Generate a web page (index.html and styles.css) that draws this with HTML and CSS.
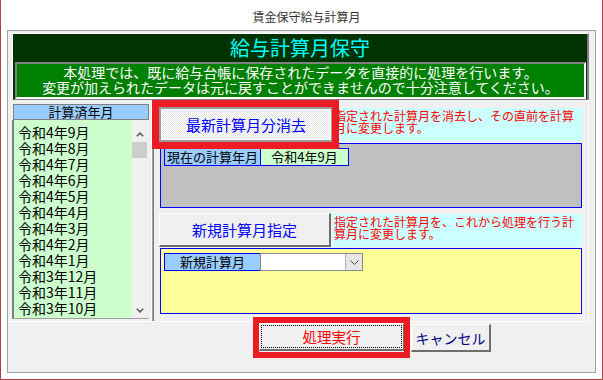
FILE: index.html
```html
<!DOCTYPE html>
<html lang="ja">
<head>
<meta charset="utf-8">
<title>賃金保守給与計算月</title>
<link rel="stylesheet" href="styles.css">
</head>
<body>
<div class="window">
  <div class="titlebar">賃金保守給与計算月</div>
  <div class="panel">
    <div class="header">
      <div class="header-title">給与計算月保守</div>
      <div class="notice">本処理では、既に給与台帳に保存されたデータを直接的に処理を行います。<br>変更が加えられたデータは元に戻すことができませんので十分注意してください。</div>
    </div>
    <div class="main">
      <div class="left">
        <div class="list-head">計算済年月</div>
        <div class="list">
          <div class="items">
            <div>令和4年9月</div>
            <div>令和4年8月</div>
            <div>令和4年7月</div>
            <div>令和4年6月</div>
            <div>令和4年5月</div>
            <div>令和4年4月</div>
            <div>令和4年3月</div>
            <div>令和4年2月</div>
            <div>令和4年1月</div>
            <div>令和3年12月</div>
            <div>令和3年11月</div>
            <div>令和3年10月</div>
            <div>令和3年9月</div>
          </div>
          <div class="scrollbar">
            <svg class="sb-up" width="8" height="5" viewBox="0 0 8 5"><path d="M0.8 4.3 L4 1.1 L7.2 4.3" stroke="#606060" stroke-width="1.6" fill="none"/></svg>
            <div class="thumb"></div>
            <div class="sb-fill"></div>
            <svg class="sb-down" width="8" height="5" viewBox="0 0 8 5"><path d="M0.8 0.7 L4 3.9 L7.2 0.7" stroke="#606060" stroke-width="1.6" fill="none"/></svg>
          </div>
        </div>
      </div>
      <div class="divider"></div>
      <div class="right">
        <div class="row row1">
          <button class="btn btn-top">最新計算月分消去</button>
          <div class="desc">指定された計算月を消去し、その直前を計算<br>月に変更します。</div>
        </div>
        <div class="box box-gray">
          <div class="field">
            <span class="label">現在の計算年月</span>
            <span class="value">令和4年9月</span>
          </div>
        </div>
        <div class="row row2">
          <button class="btn btn-new">新規計算月指定</button>
          <div class="desc desc2">指定された計算月を、これから処理を行う計<br>算月に変更します。</div>
        </div>
        <div class="box box-yellow">
          <div class="field">
            <span class="label label-new">新規計算月</span>
            <span class="select"><span class="select-btn"><svg width="9" height="5" viewBox="0 0 9 5"><path d="M0.5 0.5 L4.5 4.5 L8.5 0.5" stroke="#505050" stroke-width="1" fill="none"/></svg></span></span>
          </div>
        </div>
      </div>
    </div>
    <div class="footer">
      <button class="btn btn-exec"><span class="focus">処理実行</span></button>
      <button class="btn btn-cancel">キャンセル</button>
    </div>
  </div>
  <div class="mark mark-top"></div>
  <div class="mark mark-exec"></div>
</div>
</body>
</html>
```
FILE: styles.css
```css
* { box-sizing: border-box; }
html, body { margin: 0; padding: 0; }
body {
  width: 603px;
  height: 380px;
  overflow: hidden;
  background: #fff;
  font-family: "Noto Sans CJK JP", "Noto Sans", sans-serif;
  color: #000;
}
.window {
  position: relative;
  width: 603px;
  height: 380px;
  border: 1px solid #a94442;
  border-top: none;
  background: #fff;
}
.titlebar {
  height: 30px;
  padding: 2px 0 0 10px;
  display: flex;
  align-items: center;
  justify-content: center;
  font-size: 12px;
  color: #333;
}
.panel {
  margin-left: 6px;
  width: 589px;
  height: 343px;
  border: 1px solid #a0a0a0;
  background: #f0f0f0;
}
.header {
  margin: 2px 0 0 4px;
  width: 577px;
  height: 67px;
  background: #003300;
  border-top: 1px solid #fff;
  border-left: 1px solid #fff;
  border-right: 2px solid #808080;
  border-bottom: 1px solid #808080;
}
.header-title {
  height: 28px;
  line-height: 28px;
  text-align: center;
  color: #00ffff;
  font-size: 20px;
}
.notice {
  margin-left: 2px;
  width: 571px;
  height: 37px;
  padding-top: 1px;
  background: #008000;
  border-style: solid;
  border-width: 2px;
  border-color: #808080 #fff #fff #808080;
  color: #fff;
  font-size: 14px;
  line-height: 15px;
  text-align: center;
  white-space: nowrap;
}
.main {
  display: flex;
  width: 581px;
  height: 222px;
  border-right: 1px solid #fff;
  border-bottom: 1px solid #fff;
}
.left {
  margin-left: 4px;
  width: 138px;
  display: flex;
  flex-direction: column;
}
.list-head {
  margin: 4px 0 0 1px;
  width: 136px;
  height: 16px;
  border: 1px solid #808080;
  background: #99ccff;
  font-size: 13px;
  line-height: 14px;
  text-align: center;
}
.list {
  display: flex;
  width: 137px;
  height: 199px;
  border-left: 2px solid #808080;
  border-right: 1px solid #f0f0f0;
  border-bottom: 1px solid #a0a0a0;
  overflow: hidden;
}
.items {
  width: 118px;
  padding: 4px 0 0 4px;
  background: #ccffcc;
  font-size: 14px;
  line-height: 16px;
  white-space: nowrap;
}
.scrollbar {
  width: 16px;
  background: #f0f0f0;
  display: flex;
  flex-direction: column;
  align-items: center;
}
.sb-up { margin-top: 12px; flex: none; }
.thumb {
  margin-top: 5px;
  width: 15px;
  height: 16px;
  align-self: flex-start;
  background: #cdcdcd;
}
.sb-fill { flex: 1; }
.sb-down { margin-bottom: 5px; flex: none; }
.divider {
  width: 5px;
  margin-top: 1px;
  border-left: 1px solid #f0f0f0;
  border-right: 1px solid #f0f0f0;
  background: linear-gradient(to right, #fff 0 1px, #a0a0a0 1px 2px, #808080 2px 3px);
}
.right {
  width: 433px;
  display: flex;
  flex-direction: column;
}
.row {
  display: flex;
  align-items: flex-start;
}
.row1 { margin-top: 7px; }
.row2 { margin-top: 5px; }
.btn {
  font-family: inherit;
  margin: 0;
  padding: 0;
  background: #f0f0f0;
  border-style: solid;
  border-width: 1px 2px 2px 1px;
  border-color: #fff #6e6e6e #6e6e6e #fff;
  cursor: default;
}
.btn-top {
  margin-left: 4px;
  width: 174px;
  height: 35px;
  border: 2px solid #9a9a9a;
  box-shadow: inset 1px 1px #fff, inset -1px -1px #fff;
  background-color: #f4f4f4;
  background-image: repeating-conic-gradient(#ffffff 0 25%, #e6e6e6 0 50%);
  background-size: 2px 2px;
  color: #0000ff;
  font-size: 15px;
}
.btn-new {
  margin-left: 4px;
  width: 172px;
  height: 34px;
  color: #0000ff;
  font-size: 15px;
}
.desc {
  width: 250px;
  height: 33px;
  margin-top: 1px;
  padding: 2px 0 0 1px;
  background: #ccffff;
  color: #ff0000;
  font-size: 12px;
  line-height: 12px;
  white-space: nowrap;
}
.desc2 { margin-left: 2px; width: 249px; }
.box {
  margin: 1px 0 0 5px;
  width: 422px;
  border: 1px solid #0000ff;
  padding: 4px 0 0 3px;
}
.box-gray { height: 65px; background: #c0c0c0; }
.box-yellow { height: 66px; background: #ffff99; }
.field { display: flex; }
.label, .value {
  height: 18px;
  border: 1px solid #0000ff;
  font-size: 13px;
  line-height: 16px;
  text-align: center;
  white-space: nowrap;
}
.label { width: 97px; background: #99ccff; }
.value { width: 89px; margin-left: -1px; background: #ccffcc; }
.select {
  width: 103px;
  height: 18px;
  margin-left: -1px;
  background: #fff;
  border: 1px solid #8a8a8a;
  display: flex;
  justify-content: flex-end;
}
.select-btn {
  width: 17px;
  height: 16px;
  background: #e6e6e6;
  border-left: 1px solid #b4b4b4;
  display: flex;
  align-items: center;
  justify-content: center;
}
.footer {
  display: flex;
  align-items: flex-start;
  gap: 6px;
  padding: 1px 0 0 251px;
}
.btn-exec {
  width: 146px;
  height: 28px;
  padding: 1px;
  display: flex;
  color: #ff0000;
  font-size: 14.5px;
}
.focus {
  flex: 1;
  display: flex;
  align-items: center;
  justify-content: center;
  border: 1px dotted #000;
  height: 100%;
}
.btn-cancel {
  margin-top: 1px;
  width: 80px;
  height: 28px;
  color: #000080;
  font-size: 14px;
}
.mark {
  position: absolute;
  border-style: solid;
  border-color: #ed1c24;
}
.mark-top {
  left: 151px;
  top: 100px;
  width: 187px;
  height: 49px;
  border-width: 7px;
}
.mark-exec {
  left: 252px;
  top: 317px;
  width: 157px;
  height: 41px;
  border-width: 6px;
}
```
